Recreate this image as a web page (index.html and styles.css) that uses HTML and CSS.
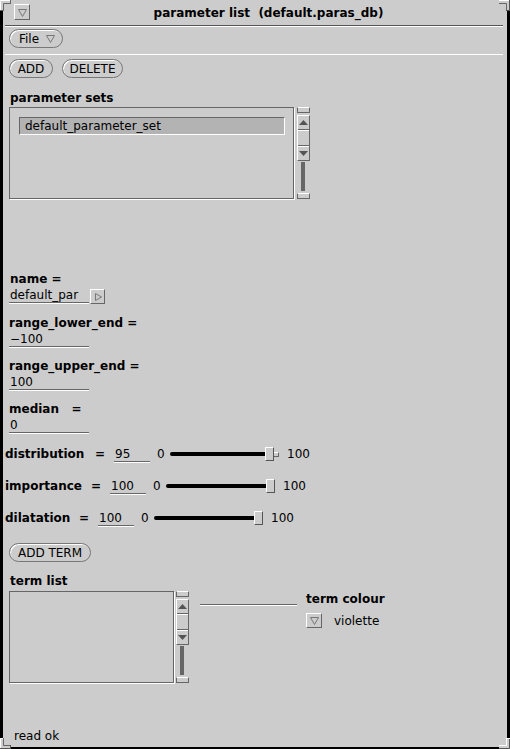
FILE: index.html
```html
<!DOCTYPE html>
<html>
<head>
<meta charset="utf-8">
<title>parameter list</title>
<link rel="stylesheet" href="styles.css">
</head>
<body>
<div class="win">
  <svg class="corner c-tl" width="11" height="11" viewBox="0 0 11 11"><path d="M0 0H11V4H4V11H0Z" fill="#ccc"/><path d="M0.5 11V0.5H11" stroke="#fff" fill="none"/><path d="M3.5 11V3.5H11" stroke="#666" fill="none"/><path d="M10.5 0V4" stroke="#666"/><path d="M0 10.5H4" stroke="#666"/></svg>
  <svg class="corner c-tr" width="11" height="11" viewBox="0 0 11 11"><path d="M0 0H11V11H7V4H0Z" fill="#ccc"/><path d="M0 0.5H10.5V11" stroke="#fff" fill="none"/><path d="M0 3.5H7.5V11" stroke="#666" fill="none"/><path d="M10.5 0V11" stroke="#555"/><path d="M7 10.5H11" stroke="#555"/></svg>
  <svg class="corner c-bl" width="11" height="11" viewBox="0 0 11 11"><path d="M0 0H4V7H11V11H0Z" fill="#ccc"/><path d="M0.5 11V0.5H4" stroke="#fff" fill="none"/><path d="M3.5 0V7.5H11" stroke="#666" fill="none"/><path d="M0 10.5H11" stroke="#555"/><path d="M10.5 7V11" stroke="#555"/></svg>
  <svg class="corner c-br" width="11" height="11" viewBox="0 0 11 11"><path d="M7 0H11V11H0V7H7Z" fill="#ccc"/><path d="M7.5 0V7.5H0" stroke="#fff" fill="none"/><path d="M0 10.5H10.5V0" stroke="#555" fill="none"/><path d="M7 0.5H11" stroke="#fff"/></svg>

  <header class="titlebar">
    <span class="wmbtn"><svg width="9" height="8" viewBox="0 0 9 8"><polygon points="0.5,0.5 8.5,0.5 4.5,7.5" fill="none" stroke="#777"/></svg></span>
    <span class="title">parameter list&nbsp; (default.paras_db)</span>
  </header>
  <div class="sep sep-dark"></div>
  <div class="menubar">
    <span class="btn btn-file">File <svg class="tri" width="9" height="8" viewBox="0 0 9 8"><polygon points="0.5,0.5 8.5,0.5 4.5,7.5" fill="none" stroke="#777"/></svg></span>
  </div>
  <div class="sep sep-light"></div>

  <main class="panel">
    <div class="btnrow">
      <span class="btn btn-add">ADD</span>
      <span class="btn btn-del">DELETE</span>
    </div>

    <div class="lbl lbl-sets">parameter sets</div>
    <div class="listwrap">
      <div class="list list-sets">
        <div class="item sel">default_parameter_set</div>
      </div>
      <div class="sbar sbar-sets">
        <div class="anchor"></div>
        <div class="elev">
          <div class="eseg up"><svg width="9" height="5" viewBox="0 0 9 5"><polygon points="4.5,0 9,5 0,5" fill="#555"/></svg></div>
          <div class="eseg mid"></div>
          <div class="eseg down"><svg width="9" height="5" viewBox="0 0 9 5"><polygon points="0,0 9,0 4.5,5" fill="#555"/></svg></div>
        </div>
        <div class="cable"></div>
        <div class="anchor"></div>
      </div>
    </div>

    <div class="lbl lbl-name">name =</div>
    <div class="vrow">
      <span class="field f80">default_par</span>
      <span class="mbtn mbtn-right"><svg width="7" height="8" viewBox="0 0 7 8"><polygon points="0.5,0.5 6.5,4 0.5,7.5" fill="none" stroke="#777"/></svg></span>
    </div>

    <div class="lbl lbl-next">range_lower_end =</div>
    <div class="vrow"><span class="field f80">&minus;100</span></div>

    <div class="lbl lbl-next">range_upper_end =</div>
    <div class="vrow"><span class="field f80">100</span></div>

    <div class="lbl lbl-next">median&nbsp;&nbsp;&nbsp;=</div>
    <div class="vrow"><span class="field f80">0</span></div>

    <div class="srow srow-dist">
      <span class="slab">distribution</span>
      <span class="eq">=</span>
      <span class="field sval">95</span>
      <span class="smin">0</span>
      <div class="slider">
        <span class="fill" style="width:95px"></span>
        <span class="thumb"></span>
        <span class="rest" style="width:5px"></span>
      </div>
      <span class="smax">100</span>
    </div>

    <div class="srow srow-imp">
      <span class="slab">importance</span>
      <span class="eq">=</span>
      <span class="field sval">100</span>
      <span class="smin">0</span>
      <div class="slider">
        <span class="fill" style="width:100px"></span>
        <span class="thumb"></span>
      </div>
      <span class="smax">100</span>
    </div>

    <div class="srow srow-dil">
      <span class="slab">dilatation</span>
      <span class="eq">=</span>
      <span class="field sval">100</span>
      <span class="smin">0</span>
      <div class="slider">
        <span class="fill" style="width:100px"></span>
        <span class="thumb"></span>
      </div>
      <span class="smax">100</span>
    </div>

    <div class="btnrow2"><span class="btn btn-term">ADD TERM</span></div>

    <div class="lbl lbl-term">term list</div>
    <div class="termrow">
      <div class="listwrap">
        <div class="list list-term"></div>
        <div class="sbar sbar-term">
          <div class="anchor"></div>
          <div class="elev">
            <div class="eseg up"><svg width="9" height="5" viewBox="0 0 9 5"><polygon points="4.5,0 9,5 0,5" fill="#555"/></svg></div>
            <div class="eseg mid"></div>
            <div class="eseg down"><svg width="9" height="5" viewBox="0 0 9 5"><polygon points="0,0 9,0 4.5,5" fill="#555"/></svg></div>
          </div>
          <div class="cable"></div>
          <div class="anchor"></div>
        </div>
      </div>
      <div class="hline"></div>
      <div class="colour">
        <div class="lbl">term colour</div>
        <div class="colrow">
          <span class="mbtn mbtn-down"><svg width="9" height="8" viewBox="0 0 9 8"><polygon points="0.5,0.5 8.5,0.5 4.5,7.5" fill="none" stroke="#777"/></svg></span>
          <span class="colname">violette</span>
        </div>
      </div>
    </div>
  </main>

  <footer class="footer">read ok</footer>
</div>
</body>
</html>
```

FILE: styles.css
```css
* { box-sizing: border-box; }
html, body { margin: 0; padding: 0; }
body {
  width: 510px;
  height: 749px;
  overflow: hidden;
  background: #cccccc;
  color: #000;
  font-family: "DejaVu Sans", "Noto Sans", sans-serif;
  font-size: 12px;
  line-height: 14px;
}
.win {
  position: relative;
  width: 510px;
  height: 749px;
  border-left: 3px solid #000;
  border-right: 3px solid #000;
  border-bottom: 2px solid #000;
  display: flex;
  flex-direction: column;
}
.corner { position: absolute; display: block; }
.c-tl { left: -3px; top: 0; }
.c-tr { right: -3px; top: 0; }
.c-bl { left: -3px; bottom: -2px; }
.c-br { right: -3px; bottom: -2px; }

/* title bar */
.titlebar {
  height: 25px;
  display: flex;
  align-items: flex-start;
}
.wmbtn {
  margin: 4px 0 0 11px;
  width: 16px;
  height: 16px;
  border: 1px solid;
  border-color: #fff #666 #666 #fff;
  display: flex;
  align-items: center;
  justify-content: center;
  padding-top: 1px;
}
.title {
  flex: 1;
  text-align: center;
  font-weight: bold;
  padding-top: 6px;
}
.sep { margin: 0 4px 0 2px; }
.sep-dark { height: 2px; border-top: 1px solid #555; border-bottom: 1px solid #fff; }
.sep-light { height: 1px; background: #fff; }

.menubar { height: 27px; padding: 2px 0 0 6px; }

/* buttons */
.btn {
  display: inline-flex;
  align-items: center;
  justify-content: center;
  height: 19px;
  border: 1px solid #777;
  border-radius: 10px;
  box-shadow: inset 1px 1px 0 #fff;
  line-height: 14px;
  white-space: nowrap;
}
.btn-file { width: 54px; justify-content: flex-start; padding-left: 9px; }
.btn-file .tri { margin-left: 7px; }
.btn-add { width: 44px; }
.btn-del { width: 61px; margin-left: 9px; }
.btn-term { width: 82px; }

.panel { padding-left: 6px; display: flex; flex-direction: column; align-items: flex-start; }
.btnrow { margin-top: 4px; display: flex; }

.lbl { font-weight: bold; height: 14px; white-space: pre; }
.lbl-sets { margin-top: 13px; margin-left: 1px; }

/* list boxes */
.listwrap { display: flex; height: 92px; }
.lbl-sets + .listwrap { margin-top: 2px; }
.list {
  height: 92px;
  border: 1px solid #666;
  box-shadow: 1px 1px 0 #fff;
}
.list-sets { width: 285px; padding: 9px 0 0 9px; }
.list-term { width: 165px; }
.item.sel {
  width: 266px;
  height: 18px;
  background: #b3b3b3;
  border: 1px solid;
  border-color: #666 #fff #fff #666;
  padding: 1px 0 0 5px;
  line-height: 15px;
}

/* scrollbar */
.sbar { width: 13px; display: flex; flex-direction: column; }
.sbar-sets { margin-left: 3px; }
.sbar-term { margin-left: 2px; }
.anchor {
  height: 6px;
  border: 1px solid;
  border-color: #fff #666 #666 #666;
  background: #ccc;
}
.elev {
  margin-top: 2px;
  height: 46px;
  border: 1px solid;
  border-color: #fff #666 #666 #fff;
  display: flex;
  flex-direction: column;
}
.eseg { flex: 1; display: flex; align-items: center; justify-content: center; }
.eseg.up { border-bottom: 1px solid #666; }
.eseg.mid { border-top: 1px solid #fff; border-bottom: 1px solid #666; }
.eseg.down { border-top: 1px solid #fff; }
.cable { flex: 1; width: 4px; margin: 1px 0 2px 4px; background: #666; }

/* labelled fields */
.lbl-name { margin-top: 73px; margin-left: 1px; }
.lbl-next { margin-top: 12px; }
.vrow { margin-top: 2px; display: flex; align-items: flex-start; }
.field {
  display: block;
  height: 15px;
  line-height: 14px;
  border-bottom: 1px solid #666;
  box-shadow: 0 1px 0 #fff;
  white-space: nowrap;
}
.f80 { width: 80px; padding-left: 1px; }
.mbtn {
  display: flex;
  align-items: center;
  justify-content: center;
  border: 1px solid;
  border-color: #fff #666 #666 #fff;
}
.mbtn-right { width: 15px; height: 15px; margin: 1px 0 0 1px; padding-left: 1px; }
.mbtn-down { width: 16px; height: 15px; padding-top: 1px; }

/* slider rows */
.srow { display: flex; align-items: flex-start; margin-left: -4px; height: 15px; }
.srow-dist { margin-top: 14px; }
.srow-imp, .srow-dil { margin-top: 17px; }
.slab { font-weight: bold; white-space: nowrap; }
.srow-dist .slab { width: 90px; }
.srow-imp .slab { width: 86px; }
.srow-dil .slab { width: 74px; }
.eq { width: 19px; font-weight: bold; }
.sval { width: 36px; padding-left: 1px; }
.smin { margin-left: 7px; width: 13px; }
.slider { display: flex; align-items: center; width: 109px; height: 14px; }
.fill { height: 4px; background: #000; border-radius: 2px 0 0 2px; }
.thumb {
  width: 9px;
  height: 14px;
  border: 1px solid;
  border-color: #fff #555 #555 #fff;
  background: #ccc;
}
.rest {
  height: 5px;
  border-top: 1px solid #fff;
  border-bottom: 1px solid #666;
  border-right: 1px solid #666;
}
.smax { margin-left: 8px; }

.btnrow2 { margin-top: 17px; }
.lbl-term { margin-top: 12px; margin-left: 1px; }
.termrow { margin-top: 3px; display: flex; align-items: flex-start; }
.hline {
  margin: 13px 0 0 11px;
  width: 97px;
  height: 2px;
  border-top: 1px solid #666;
  border-bottom: 1px solid #fff;
}
.colour { margin: 1px 0 0 9px; display: flex; flex-direction: column; }
.colrow { margin-top: 7px; display: flex; align-items: flex-start; }
.colname { margin: 1px 0 0 12px; }

.footer { margin-top: auto; padding: 0 0 4px 11px; height: 18px; }
```
